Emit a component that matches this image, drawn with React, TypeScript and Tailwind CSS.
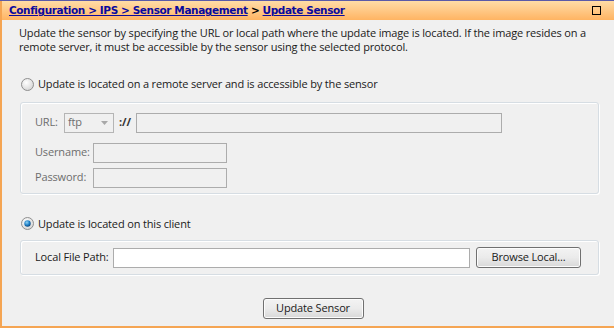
import React from "react";

function Radio({ checked }: { checked?: boolean }) {
  return (
    <svg width="13" height="13" viewBox="0 0 13 13" className="shrink-0">
      <defs>
        <radialGradient id={checked ? "rgc" : "rgu"} cx="0.4" cy="0.35" r="0.7">
          <stop offset="0" stopColor="#ffffff" />
          <stop offset="1" stopColor="#d4d4d4" />
        </radialGradient>
        <radialGradient id="dot" cx="0.4" cy="0.35" r="0.7">
          <stop offset="0" stopColor="#8fd3f5" />
          <stop offset="0.6" stopColor="#1a7bc4" />
          <stop offset="1" stopColor="#0d3f6e" />
        </radialGradient>
      </defs>
      <circle cx="6.5" cy="6.5" r="6" fill={`url(#${checked ? "rgc" : "rgu"})`} stroke="#8f8f8f" strokeWidth="1" />
      {checked && <circle cx="6.5" cy="6.5" r="3.2" fill="url(#dot)" />}
    </svg>
  );
}

export default function App() {
  const font = { fontFamily: '"Open Sans", "Noto Sans", sans-serif', letterSpacing: "-0.15px" };
  return (
    <div className="w-[614px] h-[328px] overflow-hidden bg-[#f0f0f0] relative" style={font}>
      <div className="h-[1px] bg-[#5a5aa8]" />
      <div className="flex h-[327px] border-l-2 border-b-2 border-[#f5a553]">
        <div className="flex-1 flex flex-col">
          <div className="h-[19px] bg-gradient-to-b from-[#ffdca6] to-[#ffb462] flex items-center pl-[7px] pr-[13px]">
            <div
              className="text-[10.5px] font-bold text-[#0a0a9e] leading-none"
              style={{ fontFamily: '"DejaVu Sans", Verdana, sans-serif', letterSpacing: "-0.4px" }}
            >
              <span className="underline">Configuration &gt; IPS &gt; Sensor Management</span>
              <span className="text-black"> &gt; </span>
              <span className="underline">Update Sensor</span>
            </div>
            <div className="ml-auto w-[9px] h-[9px] border border-black" />
          </div>
          <div className="pl-[17px] pt-[6px] text-[11px] leading-[14px] text-[#1a1a1a] pr-2">
            Update the sensor by specifying the URL or local path where the update image is located. If the image resides on a
            <br />
            remote server, it must be accessible by the sensor using the selected protocol.
          </div>

          <div className="mt-[22px] ml-[19px] flex items-center gap-[4px] text-[11px] text-[#1a1a1a]">
            <Radio />
            <span>Update is located on a remote server and is accessible by the sensor</span>
          </div>

          <div className="mt-[9px] ml-[18px] w-[579px] h-[92px] rounded-[3px] border border-[#d6dde3] shadow-[inset_1px_1px_0_#ffffff,1px_1px_0_#ffffff] px-[14px] pt-[10px] text-[11px] text-[#6d6d6d]">
            <div className="flex items-center h-[20px]">
              <span className="w-[29px]">URL:</span>
              <div className="w-[50px] h-[20px] border border-[#b5b5b5] flex items-center justify-between pl-[3px] pr-[5px]">
                <span>ftp</span>
                <svg width="7" height="4" viewBox="0 0 7 4"><path d="M0 0 L7 0 L3.5 4 Z" fill="#a8a8a8" /></svg>
              </div>
              <span className="ml-[5px] w-[17px] text-[#333] font-bold">://</span>
              <div className="w-[366px] h-[20px] border border-[#acacac]" />
            </div>
            <div className="flex items-center h-[20px] mt-[10px]">
              <span className="w-[58px]">Username:</span>
              <div className="w-[134px] h-[20px] border border-[#acacac]" />
            </div>
            <div className="flex items-center h-[20px] mt-[5px]">
              <span className="w-[58px]">Password:</span>
              <div className="w-[134px] h-[20px] border border-[#acacac]" />
            </div>
          </div>

          <div className="mt-[22px] ml-[19px] flex items-center gap-[4px] text-[11px] text-[#1a1a1a]">
            <Radio checked />
            <span>Update is located on this client</span>
          </div>

          <div className="mt-[8px] ml-[18px] w-[579px] h-[35px] rounded-[3px] border border-[#d6dde3] shadow-[inset_1px_1px_0_#ffffff,1px_1px_0_#ffffff] flex items-center pl-[14px] text-[11px] text-[#1a1a1a]">
            <span className="w-[78px]">Local File Path:</span>
            <div className="w-[357px] h-[20px] border border-[#acacac] bg-white" />
            <button className="ml-[6px] w-[105px] h-[21px] rounded-[3px] border border-[#707070] bg-gradient-to-b from-[#f3f3f3] via-[#ebebeb] to-[#d8d8d8] text-[11px] text-[#1a1a1a] shadow-[inset_0_0_0_1px_#fcfcfc]">
              Browse Local...
            </button>
          </div>

          <div className="mt-[23px] flex justify-center pl-[10px]">
            <button className="w-[101px] h-[21px] rounded-[3px] border border-[#707070] bg-gradient-to-b from-[#f3f3f3] via-[#ebebeb] to-[#d8d8d8] text-[11px] text-[#1a1a1a] shadow-[inset_0_0_0_1px_#fcfcfc]">
              Update Sensor
            </button>
          </div>
        </div>
      </div>
    </div>
  );
}
